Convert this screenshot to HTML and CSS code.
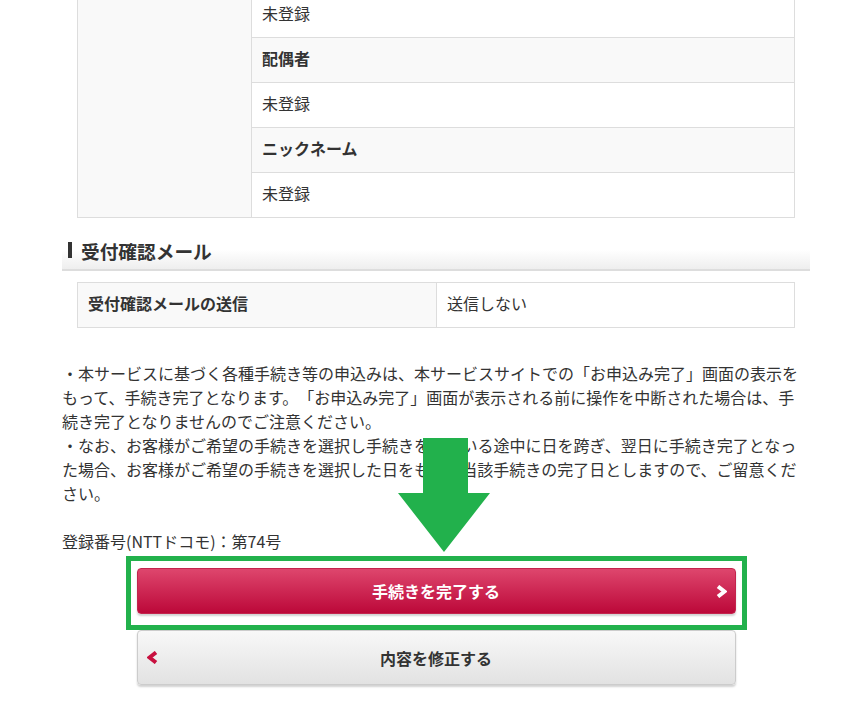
FILE: index.html
```html
<!DOCTYPE html>
<html lang="ja">
<head>
  <meta charset="UTF-8">
  <meta name="viewport" content="width=device-width, initial-scale=1" />
  <title>お申込み内容の確認</title>
  <link rel="stylesheet" href="styles.css">
</head>
<body>
  <main class="page">
    <table class="info">
      <tr>
        <th class="side" rowspan="5"></th>
        <td>未登録</td>
      </tr>
      <tr><th>配偶者</th></tr>
      <tr><td>未登録</td></tr>
      <tr><th>ニックネーム</th></tr>
      <tr><td>未登録</td></tr>
    </table>

    <h2 class="heading">受付確認メール</h2>
    <table class="info mail">
      <tr>
        <th>受付確認メールの送信</th>
        <td>送信しない</td>
      </tr>
    </table>

    <p class="notes">
      ・本サービスに基づく各種手続き等の申込みは、本サービスサイトでの「お申込み完了」画面の表示をもって、手続き完了となります。「お申込み完了」画面が表示される前に操作を中断された場合は、手続き完了となりませんのでご注意ください。<br>
      ・なお、お客様がご希望の手続きを選択し手続きをしている途中に日を跨ぎ、翌日に手続き完了となった場合、お客様がご希望の手続きを選択した日をもって当該手続きの完了日としますので、ご留意ください。
    </p>
    <p class="reg">登録番号(NTTドコモ)：第74号</p>

    <div class="buttons">
      <button type="button" class="btn btn-primary">
        <span></span>
        <span>手続きを完了する</span>
        <svg class="chev chev-right" width="11" height="13" viewBox="0 0 11 13"><polyline points="2,1.5 8.5,6.5 2,11.5" fill="none" stroke="#fff" stroke-width="4"/></svg>
      </button>
      <button type="button" class="btn btn-secondary">
        <svg class="chev chev-left" width="11" height="13" viewBox="0 0 11 13"><polyline points="9,1.5 2.5,6.5 9,11.5" fill="none" stroke="#c8103f" stroke-width="4"/></svg>
        <span>内容を修正する</span>
        <span></span>
      </button>
    </div>

    <!-- annotation marks drawn over the page -->
    <svg class="mark-arrow" width="92" height="114" viewBox="0 0 92 114"><polygon points="25,0 70,0 70,55 92,55 46,114 0,55 25,55" fill="#22b14c"/></svg>
    <div class="mark-frame"></div>
  </main>
</body>
</html>
```

FILE: styles.css
```css
body {
  margin: 0;
  font-family: "Noto Sans CJK JP", sans-serif;
  font-size: 16px;
  line-height: 24px;
  color: #333;
  background: #fff;
  text-spacing-trim: space-all;
}
.page {
  position: relative;
  width: 748px;
  margin: -8px 0 0 62px;
}
.info {
  border-collapse: collapse;
  width: 718px;
  margin: 0 15px;
}
.info th,
.info td {
  border: 1px solid #ddd;
  padding: 8px 10px 12px;
  height: 24px;
  text-align: left;
  vertical-align: middle;
}
.info th {
  background: #f9f9f9;
  font-weight: bold;
}
.info td {
  background: #fff;
}
.info .side {
  width: 153px;
}
.mail {
  margin-top: 11px;
}
.mail th {
  width: 338px;
}
.heading {
  display: flex;
  align-items: center;
  margin: 19px 0 0;
  padding: 0 0 4px 6px;
  font-size: 18.7px;
  line-height: 28px;
  font-weight: bold;
  background: linear-gradient(to bottom, #fff 40%, #eee 100%);
  border-bottom: 2px solid #ddd;
}
.heading::before {
  content: "";
  width: 4px;
  height: 16px;
  margin: -2px 9px 0 0;
  background: #333;
}
.notes {
  margin: 33px 0 0;
}
.reg {
  margin: 24px 0 0;
}
.buttons {
  display: flex;
  flex-direction: column;
  align-items: center;
  gap: 16px;
  margin-top: 15px;
  padding-bottom: 20px;
}
.btn {
  display: grid;
  grid-template-columns: 1fr auto 1fr;
  align-items: center;
  width: 599px;
  box-sizing: border-box;
  font: inherit;
  font-weight: bold;
  border-radius: 4px;
  cursor: pointer;
  box-shadow: 0 2px 2px rgba(0,0,0,0.18);
}
.btn-primary {
  height: 46px;
  padding: 0 8px;
  color: #fff;
  background: linear-gradient(to bottom, #de466d 0%, #bc0839 100%);
  border: 1px solid #c3244d;
}
.btn-secondary {
  height: 55px;
  padding: 0 9px;
  color: #333;
  background: linear-gradient(to bottom, #f8f8f8 0%, #e2e2e2 100%);
  border: 1px solid #ccc;
}
.chev-right {
  justify-self: end;
}
.chev-left {
  justify-self: start;
}
.mark-arrow {
  position: absolute;
  left: 336px;
  top: 446px;
}
.mark-frame {
  position: absolute;
  left: 64px;
  top: 564px;
  width: 621px;
  height: 74px;
  box-sizing: border-box;
  border: 5px solid #22b14c;
  pointer-events: none;
}
```
